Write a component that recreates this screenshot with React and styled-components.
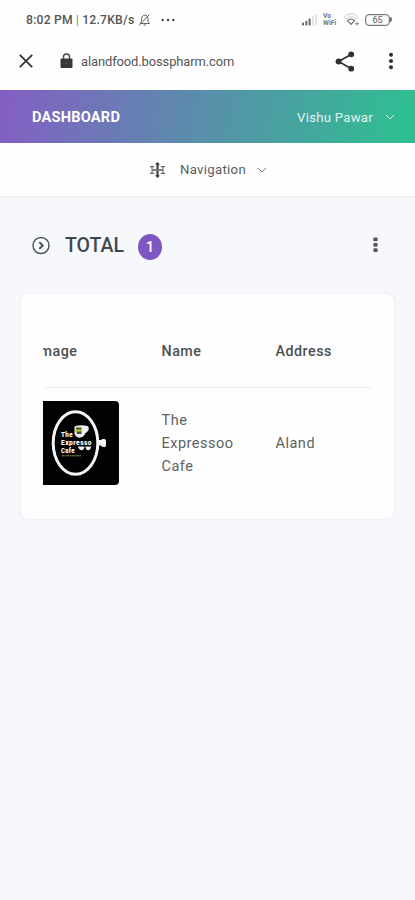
import React from "react";
import styled, { createGlobalStyle } from "styled-components";

const GlobalStyle = createGlobalStyle`
  * {
    box-sizing: border-box;
  }
  body {
    margin: 0;
    background: #f6f8fc;
    font-family: Roboto, "Liberation Sans", sans-serif;
    color: #4c5356;
  }
`;

const Page = styled.div`
  min-height: 900px;
  overflow: hidden;
  svg {
    display: block;
    flex: none;
  }
`;

const StatusBar = styled.div`
  display: flex;
  align-items: center;
  justify-content: space-between;
  height: 38px;
  padding: 1px 23px 0 26px;
  background: #fefefe;
`;

const StatusGroup = styled.div`
  display: flex;
  align-items: center;
  gap: ${(props) => props.$gap}px;
`;

const Clock = styled.span`
  width: 108px;
  font-size: 12.2px;
  font-weight: 500;
  letter-spacing: 0.2px;
  white-space: nowrap;
  color: #555;
  i {
    font-style: normal;
    font-weight: 300;
  }
`;

const BrowserBar = styled.div`
  display: flex;
  align-items: center;
  height: 52px;
  padding: 0 21px 6px 19px;
  background: #fefefe;
`;

const Url = styled.span`
  flex: 1;
  margin-left: 8px;
  font-size: 12.9px;
  letter-spacing: -0.08px;
  color: #555;
`;

const Header = styled.header`
  display: flex;
  align-items: center;
  justify-content: space-between;
  height: 53px;
  padding: 1px 20px 0 32px;
  background: linear-gradient(100deg, #845ec4 0%, #2ebf91 98%);
  color: white;
`;

const Brand = styled.span`
  font-size: 14.6px;
  font-weight: 700;
  letter-spacing: 0.2px;
`;

const User = styled.div`
  display: flex;
  align-items: center;
  gap: 12px;
  font-size: 13.2px;
  letter-spacing: 0.25px;
  color: #e0f3f0;
`;

const NavBar = styled.nav`
  display: flex;
  align-items: center;
  height: 53px;
  padding-left: 149px;
  background: #fefefe;
  box-shadow: 0 1px 1px #f0f1f4;
  span {
    width: 66px;
    margin: 0 11px 0 14px;
    font-size: 13.2px;
    letter-spacing: 0.3px;
    color: #5a5d60;
  }
`;

const TitleRow = styled.div`
  display: flex;
  align-items: center;
  height: 98px;
  padding: 0 37px 0 32px;
`;

const Title = styled.h1`
  width: 73px;
  margin: 0 0 0 14px;
  font-size: 19.5px;
  font-weight: 500;
  color: #3d494d;
`;

const Badge = styled.span`
  display: flex;
  align-items: center;
  justify-content: center;
  width: 24px;
  height: 26px;
  margin: 3px auto 0 0;
  border-radius: 50%;
  background: #7e57c2;
  font-size: 15px;
  font-weight: 500;
  color: white;
`;

const Card = styled.section`
  height: 225px;
  margin: 0 21px;
  padding: 21px 22px;
  border-radius: 8px;
  background: #fefefe;
  box-shadow: 0 0 4px rgba(60, 70, 110, 0.06);
`;

const TableScroll = styled.div`
  width: 330px;
  overflow: hidden;
`;

/* the table is scrolled a few pixels to the left */
const Table = styled.div`
  width: 337px;
  margin-left: -7px;
`;

const Row = styled.div`
  display: grid;
  grid-template-columns: 125.5px 114px 1fr;
  align-items: center;
  height: ${(props) => (props.$head ? 73 : 110)}px;
  border-bottom: ${(props) => (props.$head ? "1px solid #eeeff1" : "none")};
  font-size: ${(props) => (props.$head ? 14.3 : 14.5)}px;
  font-weight: ${(props) => (props.$head ? 500 : 400)};
  line-height: 23px;
  letter-spacing: 0.5px;
  color: ${(props) => (props.$head ? "#4a5052" : "#5d6264")};
`;

const HeadCell = styled.span`
  margin-left: ${(props) => props.$shift || 0}px;
  padding-top: 1px;
`;

const Photo = styled.div`
  width: 83px;
  height: 84px;
  border-radius: 4px;
  background: #020202;
`;

const SilentBell = () => (
  <svg width="13" height="14" viewBox="0 0 13 14" fill="none" stroke="#666" strokeWidth="1">
    <path d="M2 10.5h9.5L10 8.5V5.5C10 1 4 1 3.5 5.5v3L2 10.5M5.5 12h2.5M1 12.5L11.5 1.5" />
  </svg>
);

const MoreDots = () => (
  <svg width="14" height="4" viewBox="0 0 14 4" fill="#444">
    <circle cx="1.7" cy="2" r="1.2" />
    <circle cx="7" cy="2" r="1.2" />
    <circle cx="12.3" cy="2" r="1.2" />
  </svg>
);

const Signal = () => (
  <svg width="16" height="12" viewBox="0 0 16 12" fill="#666">
    <rect x="0" y="8.5" width="2" height="3" rx="0.7" />
    <rect x="3.3" y="6.7" width="2" height="4.8" rx="0.7" />
    <rect x="6.6" y="4.5" width="2" height="7" rx="0.7" />
    <rect x="9.9" y="2.3" width="2" height="9.2" rx="0.7" fill="#e0e0e0" />
    <rect x="13.2" y="0.5" width="2" height="11" rx="0.7" fill="#e0e0e0" />
  </svg>
);

const VoWifi = styled.span`
  width: 15px;
  font-size: 6.8px;
  line-height: 6.5px;
  font-weight: 700;
  color: #777;
`;

const Wifi = () => (
  <svg width="17" height="13" viewBox="0 0 17 13" fill="none" strokeWidth="1.2">
    <path d="M1 4.2C5-.2 11-.2 15 4.2L13 6.2C9.8 3 6.2 3 3 6.2Z" stroke="#c4c4c4" strokeWidth="0.9" />
    <path d="M4.5 7.7C6.8 5.6 9.2 5.6 11.5 7.7L8 11.4Z" stroke="#777" />
    <path d="M12 10.7h4M14 8.9v3.6" stroke="#999" />
  </svg>
);

const BatteryBox = styled.div`
  display: flex;
  align-items: center;
`;

const BatteryLevel = styled.span`
  width: 25px;
  height: 12px;
  border: 1.5px solid #777;
  border-radius: 4px;
  box-shadow: inset 0 0 0 1px #ddd;
  font-size: 9px;
  line-height: 10px;
  font-weight: 500;
  text-align: center;
  color: #777;
`;

const BatteryTip = styled.span`
  width: 2px;
  height: 5px;
  border-radius: 0 2px 2px 0;
  background: #777;
`;

const Close = () => (
  <svg width="14" height="14" viewBox="0 0 14 14" stroke="#333" strokeWidth="1.8">
    <path d="M.8.8L13.2 13.2M13.2.8L.8 13.2" />
  </svg>
);

const LockIcon = styled.svg`
  margin-left: 27px;
`;

const Lock = () => (
  <LockIcon width="13" height="16" viewBox="0 0 13 16">
    <path d="M3.5 6V4a3 3 0 0 1 6 0v2" fill="none" stroke="#444" strokeWidth="1.4" />
    <rect x="0.5" y="5.4" width="12" height="9.6" rx="1.2" fill="#383838" />
    <circle cx="6.5" cy="10.2" r="0.9" fill="#555" />
  </LockIcon>
);

const ShareIcon = styled.svg`
  margin-right: 33px;
`;

const Share = () => (
  <ShareIcon width="20" height="21" viewBox="0 0 20 21" fill="#303030">
    <path d="M16 3.5L3.5 10.5L16 17.5" fill="none" stroke="#303030" strokeWidth="1.6" />
    <circle cx="16.2" cy="3.3" r="2.9" />
    <circle cx="3.6" cy="10.5" r="3" />
    <circle cx="16.2" cy="17.7" r="2.9" />
  </ShareIcon>
);

const Kebab = () => (
  <svg width="6" height="18" viewBox="0 0 6 18" fill="#303030">
    <circle cx="3" cy="2.7" r="2" />
    <circle cx="3" cy="9" r="2" />
    <circle cx="3" cy="15.3" r="2" />
  </svg>
);

const Chevron = ({ color }) => (
  <svg width="10" height="6" viewBox="0 0 10 6" fill="none" stroke={color} strokeWidth="1">
    <path d="M.8.8L5 5L9.2.8" />
  </svg>
);

const NavIcon = () => (
  <svg width="17" height="16" viewBox="0 0 17 16" fill="none" stroke="#666" strokeWidth="1.3">
    <path d="M8.5 1v14" stroke="#444" strokeWidth="2.2" />
    <path d="M6.8 2.8L8.5 1l1.7 1.8M6.8 13.2L8.5 15l1.7-1.8" stroke="#444" />
    <path d="M1 4.6h4.2M1 11.4h4.2M16 4.6h-4.2M16 11.4h-4.2" />
    <path d="M3 5v6M14 5v6" stroke="#888" />
    <path d="M3 8h11" strokeWidth="1.8" stroke="#777" />
  </svg>
);

const CircleArrow = () => (
  <svg width="19" height="19" viewBox="0 0 19 19" fill="none" stroke="#4a5356">
    <circle cx="9" cy="9.5" r="8" strokeWidth="1.4" />
    <path d="M7.3 6.1l3.4 3.4-3.4 3.4" strokeWidth="2" />
  </svg>
);

const SquareDots = () => (
  <svg width="5" height="16" viewBox="0 0 5 16" fill="#55585c">
    <rect x="0.4" y="0.5" width="4.2" height="3.8" rx="0.8" />
    <rect x="0.4" y="5.9" width="4.2" height="3.8" rx="0.8" />
    <rect x="0.4" y="11.3" width="4.2" height="3.8" rx="0.8" />
  </svg>
);

const CafeLogo = () => (
  <svg width="83" height="84" viewBox="0 0 83 84">
    <ellipse cx="39.5" cy="42" rx="22.3" ry="31.2" fill="none" stroke="#f5f5f5" strokeWidth="3" />
    <path d="M61 39h4c1-1.5 5-1.5 5 .5v5c0 2-4 2-5 0h-4z" fill="#f5f5f5" />
    <path d="M38.5 25.5q6-2 13-.5c2 1 2 5-2 7-2 6-9 6-11 1z" fill="#eee" />
    <path d="M40 26.5h5.5v6.5H41z" fill="#45512b" />
    <path d="M39 29.5h6.5" stroke="#b6cf35" strokeWidth="2" />
    <path d="M42 45.5h6.5c0 5-5.5 5-6.5 0M49.5 45.5h5.5c0 5-5.5 5-5.5 0" fill="#eee" />
    <g fill="#fff" fontFamily="Roboto, sans-serif" fontSize="7.4" fontWeight="900">
      <text x="25" y="36.2" textLength="12" lengthAdjust="spacingAndGlyphs">The</text>
      <text x="25" y="44" textLength="31" lengthAdjust="spacingAndGlyphs">Expresso</text>
      <text x="25" y="51.8" textLength="14" lengthAdjust="spacingAndGlyphs">Cafe</text>
    </g>
    <path d="M26 54.8h19" stroke="#8b9440" strokeWidth="1" strokeDasharray="2 .5" />
  </svg>
);

const App = () => {
  return (
    <Page>
      <GlobalStyle />
      <StatusBar>
        <StatusGroup $gap={4}>
          <Clock>
            8:02 PM <i>|</i> 12.7KB/s
          </Clock>
          <SilentBell />
          <StatusGroup $gap={2}>
            <span>&nbsp;</span>
            <MoreDots />
          </StatusGroup>
        </StatusGroup>
        <StatusGroup $gap={5}>
          <Signal />
          <VoWifi>
            Vo
            <br />
            WiFi
          </VoWifi>
          <Wifi />
          <BatteryBox>
            <BatteryLevel>65</BatteryLevel>
            <BatteryTip />
          </BatteryBox>
        </StatusGroup>
      </StatusBar>
      <BrowserBar>
        <Close />
        <Lock />
        <Url>alandfood.bosspharm.com</Url>
        <Share />
        <Kebab />
      </BrowserBar>
      <Header>
        <Brand>DASHBOARD</Brand>
        <User>
          Vishu Pawar
          <Chevron color="#d7f3ea" />
        </User>
      </Header>
      <NavBar>
        <NavIcon />
        <span>Navigation</span>
        <Chevron color="#777" />
      </NavBar>
      <TitleRow>
        <CircleArrow />
        <Title>TOTAL</Title>
        <Badge>1</Badge>
        <SquareDots />
      </TitleRow>
      <Card>
        <TableScroll>
          <Table>
            <Row $head>
              <HeadCell $shift={-1}>Image</HeadCell>
              <HeadCell>Name</HeadCell>
              <HeadCell>Address</HeadCell>
            </Row>
            <Row>
              <Photo>
                <CafeLogo />
              </Photo>
              <span>
                The
                <br />
                Expressoo
                <br />
                Cafe
              </span>
              <span>Aland</span>
            </Row>
          </Table>
        </TableScroll>
      </Card>
    </Page>
  );
};

export default App;
